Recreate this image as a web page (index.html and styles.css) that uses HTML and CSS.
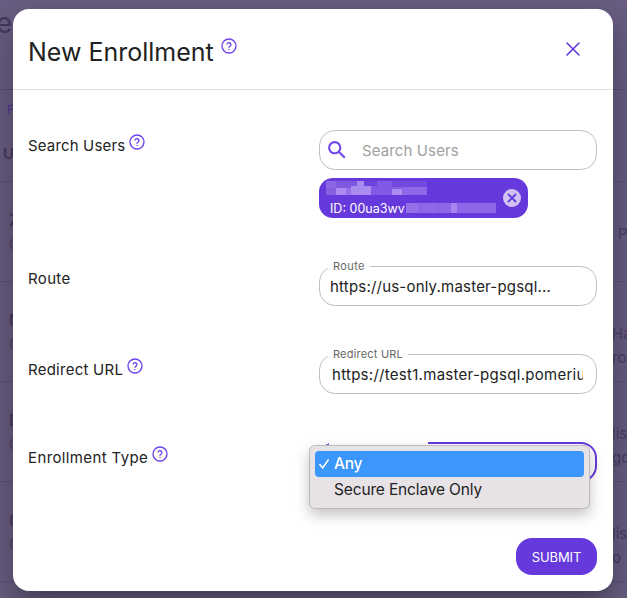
FILE: index.html
```html
<!DOCTYPE html>
<html lang="en">
<head>
<meta charset="utf-8">
<title>New Enrollment</title>
<link rel="stylesheet" href="styles.css">
</head>
<body>
<svg class="defs" aria-hidden="true">
  <symbol id="help" viewBox="0 0 24 24"><circle cx="12" cy="12" r="10.5"/><path d="M9.1 9a3 3 0 0 1 5.8 1c0 2-2.9 2.4-2.9 4M12 17v.3"/></symbol>
</svg>
<div class="page">
  <div class="page-title">e</div>
  <div class="page-filter">F</div>
  <div class="page-head">U</div>
  <div class="page-row"><div class="cell"><b>Z</b><span>C</span></div><div class="cell end"><i class="in">P</i></div></div>
  <div class="page-row"><div class="cell"><b>N</b><span>C</span></div><div class="cell end"><i>Ha</i><i>ro</i></div></div>
  <div class="page-row"><div class="cell"><b>D</b><span>C</span></div><div class="cell end"><i>lis</i><i>go</i></div></div>
  <div class="page-row"><div class="cell"><b>C</b><span>C</span></div><div class="cell end"><i>lis</i><i>o</i></div></div>
</div>

<div class="modal">
  <header class="header">
    <h1>New Enrollment</h1>
    <svg class="help"><use href="#help"/></svg>
    <svg class="close" viewBox="0 0 14 14"><path d="M1 1l12 12M13 1L1 13"/></svg>
  </header>
  <form class="body">
    <div class="row">
      <div class="label"><span class="t-search">Search Users</span><svg class="help"><use href="#help"/></svg></div>
      <div class="control">
        <div class="field search">
          <svg class="glass" viewBox="0 0 18 18"><circle cx="6.7" cy="6.7" r="5.6"/><path d="M10.8 10.8l6 6"/></svg>
          <span class="placeholder">Search Users</span>
        </div>
        <div class="chip">
          <div class="chip-text">
            <svg class="mask-name" viewBox="0 0 101 14" shape-rendering="crispEdges">
              <path fill="#8560e2" d="M0 0h101v14H0z"/><path fill="#8c67e5" d="M0 0h10v7H0z"/><path fill="#7f58e2" d="M10 0h21v7H10z"/><path fill="#a98bef" d="M10 7h10v7H10zM25 5h20v9H25zM31 0h7v5h-7z"/><path fill="#9473e8" d="M20 7h5v7h-5z"/><path fill="#6f42dc" d="M38 0h13v5H38z"/><path fill="#8259e4" d="M51 0h15v14H45V5h6z"/><path fill="#7549df" d="M66 0h35v6H66z"/><path fill="#a98aee" d="M66 8h10v6H66z"/><path fill="#8e68e8" d="M76 6h25v8H76z"/>
            </svg>
            <div class="chip-id"><span>ID: 00ua3wv</span>
              <svg class="mask-id" viewBox="0 0 90 10" shape-rendering="crispEdges"><path fill="#8b66e7" d="M0 0h90v10H0z"/><path fill="#9571e9" d="M0 0h12v10H0z"/><path fill="#9069e8" d="M20 0h10v10H20z"/><path fill="#a585ee" d="M45 0h6v10h-6z"/></svg>
            </div>
          </div>
          <svg class="remove" viewBox="0 0 18 18"><circle cx="9" cy="9" r="9" stroke="none"/><path d="M5 5l8 8M13 5l-8 8"/></svg>
        </div>
      </div>
    </div>
    <div class="row">
      <div class="label plain"><span class="t-route">Route</span></div>
      <fieldset class="field"><legend class="l-route">Route</legend><span class="value v-route">https://us-only.master-pgsql...</span></fieldset>
    </div>
    <div class="row">
      <div class="label"><span class="t-redirect">Redirect URL</span><svg class="help"><use href="#help"/></svg></div>
      <fieldset class="field"><legend class="l-redirect">Redirect URL</legend><span class="value v-redirect">https://test1.master-pgsql.pomerium</span></fieldset>
    </div>
    <div class="row">
      <div class="label"><span class="t-type">Enrollment Type</span><svg class="help"><use href="#help"/></svg></div>
      <div class="control">
        <fieldset class="field focused"><legend class="l-type"></legend></fieldset>
        <div class="menu">
          <div class="option selected"><svg class="check" viewBox="0 0 10 10"><path d="M.8 5.5l2.9 3.4L9.2 1"/></svg><span class="o-any">Any</span></div>
          <div class="option"><span class="o-secure">Secure Enclave Only</span></div>
        </div>
      </div>
    </div>
    <button class="submit" type="button">SUBMIT</button>
  </form>
</div>
</body>
</html>
```
FILE: styles.css
```css
* { box-sizing: border-box; }
body { margin: 0; width: 627px; height: 598px; overflow: hidden; background: #6a5f83; font-family: Inter, "Liberation Sans", sans-serif; color: #222; }
.defs { position: absolute; width: 0; height: 0; }

.page { height: 598px; color: #463a60; overflow: hidden; }
.page-title { height: 90px; padding-top: 4px; margin-left: -4px; border-bottom: 1px solid #5e5375; font-size: 28px; line-height: 38px; }
.page-filter { height: 40px; padding: 10px 0 0 7px; font-size: 12px; line-height: 20px; color: #50349c; }
.page-head { height: 52px; padding: 14px 0 0 3px; border-bottom: 1px solid #5e5375; font-size: 15px; line-height: 20px; font-weight: 600; }
.page-row { display: flex; justify-content: space-between; height: 100px; border-bottom: 1px solid #5e5375; }
.cell { width: 40px; padding: 26px 0 0 9px; line-height: 24px; font-size: 16px; }
.cell b, .cell span, .cell i { display: block; font-weight: 500; }
.cell span { color: #51466a; font-weight: 400; }
.end { width: 15px; padding: 40px 0 0; overflow: hidden; white-space: nowrap; font-size: 15px; }
.cell i { font-style: normal; font-weight: 400; color: #4d4166; }
.end .in { padding-left: 6px; }

.modal { position: absolute; left: 13px; top: 9px; width: 600px; height: 582px; border-radius: 16px; background: #fff; box-shadow: 0 11px 15px -7px rgba(0,0,0,.2), 0 24px 38px 3px rgba(0,0,0,.14), 0 9px 46px 8px rgba(0,0,0,.12); }
.header { display: flex; height: 81px; padding: 0 33px 0 15px; border-bottom: 1px solid #dedede; }
h1 { margin: 0; width: 188px; padding-top: 25px; font-size: 25px; line-height: 36px; font-weight: 400; white-space: nowrap; letter-spacing: 0; }
.help { width: 16px; height: 16px; flex: none; fill: none; stroke: #6e43e8; stroke-width: 2; stroke-linecap: round; }
.header .help { margin: 29px 0 0 5px; }
.close { width: 14px; height: 14px; margin: 33px 0 0 auto; fill: none; stroke: #6639dc; stroke-width: 1.6; stroke-linecap: round; }

.body { display: flex; flex-direction: column; gap: 48px; padding: 40px 16px 0 15px; }
.row { display: grid; grid-template-columns: 291px 278px; align-items: start; }
.label { display: flex; gap: 4px; padding-top: 4px; font-size: 15px; line-height: 24px; white-space: nowrap; }
.plain { padding-top: 1px; }
.t-search { letter-spacing: .16px; }
.t-route { letter-spacing: .35px; }
.t-redirect { letter-spacing: .25px; }
.t-type { letter-spacing: .38px; }
.control { position: relative; }
.field { display: flex; align-items: center; height: 40px; min-width: 0; margin: 0; padding: 0 13px 0 11px; border: 1px solid #c0c0c0; border-radius: 16px; }
.search { padding: 0 8px; gap: 16px; }
.glass { width: 18px; height: 18px; fill: none; stroke: #7048e8; stroke-width: 2.1; }
.placeholder { font-size: 15px; letter-spacing: .12px; color: #a0a0a0; white-space: nowrap; }

fieldset.field { display: block; height: 46px; margin-top: -6px; padding: 0 13px 0 8px; }
legend { height: 12px; padding: 0 5px; font-size: 11px; line-height: 12px; color: #666; white-space: nowrap; }
.l-route { letter-spacing: .4px; }
.l-redirect { letter-spacing: .2px; }
.value { display: block; margin-top: 4px; font-size: 15px; line-height: 22px; letter-spacing: .2px; white-space: nowrap; overflow: hidden; }
.v-route { margin-left: 2px; }
.v-redirect { margin-left: 4px; letter-spacing: .28px; }
fieldset.focused { height: 45px; margin-top: -5px; border: 2px solid #6639dc; }
.l-type { width: 99px; }

.chip { display: flex; width: 209px; height: 40px; margin-top: 8px; padding: 3px 7px; border-radius: 14px; background: #6639dc; color: #fff; }
.chip-text { flex: 1; min-width: 0; }
.mask-name { display: block; width: 101px; height: 14px; }
.chip-id { display: flex; align-items: center; height: 20px; margin-top: 3px; padding-left: 4px; font-size: 12.5px; white-space: nowrap; }
.chip-id span { width: 76px; flex: none; }
.mask-id { width: 90px; height: 10px; flex: none; }
.remove { width: 18px; height: 18px; margin-top: 8px; flex: none; fill: #d0c3f4; stroke: #6639dc; stroke-width: 1.8; }

.menu { position: absolute; left: -10px; top: 3px; width: 281px; height: 64px; padding: 5px; border: 1px solid #bdb9bd; border-radius: 6px; background: #e7e2e6; box-shadow: 0 6px 14px rgba(0,0,0,.24); }
.option { display: flex; align-items: center; height: 26px; padding: 0 0 2px 19px; border-radius: 4px; font-size: 15.5px; white-space: nowrap; }
.o-secure { letter-spacing: -.15px; }
.selected { gap: 5px; padding-left: 4px; background: #3b97fb; color: #fff; font-weight: 500; }
.o-any { letter-spacing: -.3px; }
.check { width: 10px; height: 10px; margin-top: 2px; fill: none; stroke: #fff; stroke-width: 1.6; stroke-linecap: round; }
.submit { align-self: flex-end; width: 81px; height: 37px; margin-top: 8px; padding: 0; border: 0; border-radius: 16px; background: #6639dc; color: #fff; font: 400 13px Inter, sans-serif; letter-spacing: -.1px; }
```
